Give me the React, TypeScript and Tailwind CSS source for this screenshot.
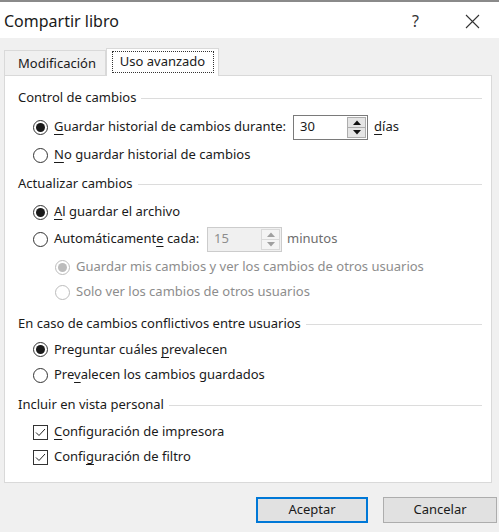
import React from "react";

const F = { fontFamily: '"Noto Sans", "Open Sans", sans-serif' };

function U({ children }: { children: React.ReactNode }) {
  return <span className="underline underline-offset-[3px] decoration-[1px]">{children}</span>;
}

function Radio({ checked, disabled }: { checked?: boolean; disabled?: boolean }) {
  return (
    <div
      className={`w-[15px] h-[15px] rounded-full border flex items-center justify-center shrink-0 bg-white ${
        disabled ? "border-[#bcbcbc]" : "border-[#333333]"
      }`}
    >
      {checked && (
        <div className={`w-[9px] h-[9px] rounded-full ${disabled ? "bg-[#bcbcbc]" : "bg-[#1a1a1a]"}`} />
      )}
    </div>
  );
}

function Check() {
  return (
    <div className="w-[15px] h-[15px] border border-[#333333] bg-white shrink-0 flex items-center justify-center">
      <svg width="11" height="9" viewBox="0 0 11 9">
        <path d="M1 4.5 L4 7.5 L10 1" fill="none" stroke="#222" strokeWidth="1" />
      </svg>
    </div>
  );
}

function Header({ text, mt }: { text: string; mt: string }) {
  return (
    <div className={`flex items-center h-[20px] pl-[13px] pr-[9px] ${mt}`}>
      <span className="text-[#1a1a1a] whitespace-nowrap">{text}</span>
      <div className="flex-1 h-px bg-[#dcdcdc] ml-[5px] mt-[1px]" />
    </div>
  );
}

function Spinner({ value, disabled }: { value: string; disabled?: boolean }) {
  return (
    <div
      className={`w-[75px] h-[25px] border flex items-center pl-[6px] pr-[1px] ${
        disabled ? "border-[#cccccc] bg-[#f0f0f0] text-[#8d8d8d]" : "border-[#7a7a7a] bg-white text-[#1a1a1a]"
      }`}
    >
      <span className="flex-1">{value}</span>
      <div className="flex flex-col w-[19px] h-[21px]">
        <div
          className={`h-[11px] border flex items-center justify-center ${
            disabled ? "border-[#d9d9d9] bg-[#f4f4f4]" : "border-[#adadad] bg-[#e5e5e5]"
          }`}
        >
          <svg width="8" height="5" viewBox="0 0 8 5">
            <path d="M0 5 L4 0.5 L8 5 Z" fill={disabled ? "#a0a0a0" : "#111"} />
          </svg>
        </div>
        <div
          className={`h-[10px] border border-t-0 flex items-center justify-center ${
            disabled ? "border-[#d9d9d9] bg-[#f4f4f4]" : "border-[#adadad] bg-[#e5e5e5]"
          }`}
        >
          <svg width="8" height="5" viewBox="0 0 8 5">
            <path d="M0 0 L4 4.5 L8 0 Z" fill={disabled ? "#a0a0a0" : "#111"} />
          </svg>
        </div>
      </div>
    </div>
  );
}

export default function App() {
  return (
    <div className="w-[499px] h-[532px] bg-[#f0f0f0] text-[13px] text-[#1a1a1a] overflow-hidden" style={F}>
      <div className="h-[2px] bg-[#8a8a8a]" />
      <div className="h-[36px] bg-white flex items-center pl-[4px] pt-[2px]">
        <span className="text-[16px] text-[#1a1a1a]">Compartir libro</span>
        <div className="flex-1" />
        <span className="text-[16px] text-[#333] w-[12px] mr-[41px]">?</span>
        <svg width="15" height="15" viewBox="0 0 15 15" className="mr-[19px]">
          <path d="M1 1 L14 14 M14 1 L1 14" stroke="#333" strokeWidth="1.1" />
        </svg>
      </div>
      <div className="pt-[10px] px-[4px]">
        <div className="flex items-end h-[27px] relative z-10">
          <div className="w-[102px] h-[25px] border border-b-0 border-[#d9d9d9] bg-[#f0f0f0] flex items-center justify-center pt-[1px]">
            <span className="ml-[4px]">Modificación</span>
          </div>
          <div className="w-[113px] h-[28px] -mb-px border border-b-0 border-[#d9d9d9] bg-white flex items-start justify-center pt-[2px]">
            <div className="w-[102px] h-[22px] border border-dotted border-[#333] flex items-center justify-center">
              <span>Uso avanzado</span>
            </div>
          </div>
        </div>
        <div className="w-[488px] h-[408px] bg-white border border-[#d9d9d9] flex flex-col">
          <Header text="Control de cambios" mt="mt-[12px]" />
          <div className="flex items-center h-[26px] mt-[6px] pl-[28px]">
            <Radio checked />
            <span className="ml-[6px]">
              <U>G</U>uardar historial de cambios durante:
            </span>
            <div className="ml-[7px]">
              <Spinner value="30" />
            </div>
            <span className="ml-[6px]">
              <U>d</U>ías
            </span>
          </div>
          <div className="flex items-center h-[26px] mt-[2px] pl-[28px]">
            <Radio />
            <span className="ml-[6px]">
              <U>N</U>o guardar historial de cambios
            </span>
          </div>
          <Header text="Actualizar cambios" mt="mt-[6px]" />
          <div className="flex items-center h-[26px] mt-[5px] pl-[28px]">
            <Radio checked />
            <span className="ml-[6px]">
              <U>A</U>l guardar el archivo
            </span>
          </div>
          <div className="flex items-center h-[26px] mt-[1px] pl-[28px]">
            <Radio />
            <span className="ml-[6px] w-[153px]">
              Automáticament<U>e</U> cada:
            </span>
            <Spinner value="15" disabled />
            <span className="ml-[5px] text-[#6d6d6d]">minutos</span>
          </div>
          <div className="flex items-center h-[24px] mt-[3px] pl-[50px] text-[#8d8d8d]">
            <Radio checked disabled />
            <span className="ml-[6px]">Guardar mis cambios y ver los cambios de otros usuarios</span>
          </div>
          <div className="flex items-center h-[24px] mt-[1px] pl-[50px] text-[#8d8d8d]">
            <Radio disabled />
            <span className="ml-[6px]">Solo ver los cambios de otros usuarios</span>
          </div>
          <Header text="En caso de cambios conflictivos entre usuarios" mt="mt-[10px]" />
          <div className="flex items-center h-[25px] mt-[3px] pl-[28px]">
            <Radio checked />
            <span className="ml-[6px]">
              Preguntar cuáles <U>p</U>revalecen
            </span>
          </div>
          <div className="flex items-center h-[26px] pl-[28px]">
            <Radio />
            <span className="ml-[6px]">
              Pre<U>v</U>alecen los cambios guardados
            </span>
          </div>
          <Header text="Incluir en vista personal" mt="mt-[7px]" />
          <div className="flex items-center h-[24px] mt-[5px] pl-[28px]">
            <Check />
            <span className="ml-[6px]">
              <U>C</U>onfiguración de impresora
            </span>
          </div>
          <div className="flex items-center h-[24px] mt-[1px] pl-[28px]">
            <Check />
            <span className="ml-[6px]">
              Confi<U>g</U>uración de filtro
            </span>
          </div>
        </div>
        <div className="flex justify-end gap-[15px] mt-[14px] pr-0">
          <button className="w-[112px] h-[26px] border-2 border-[#0078d7] bg-[#e1e1e1] text-[13px] text-[#1a1a1a] flex items-center justify-center">
            Aceptar
          </button>
          <button className="w-[114px] h-[26px] border border-[#adadad] bg-[#e1e1e1] text-[13px] text-[#1a1a1a] flex items-center justify-center -mr-[2px]">
            Cancelar
          </button>
        </div>
      </div>
    </div>
  );
}
